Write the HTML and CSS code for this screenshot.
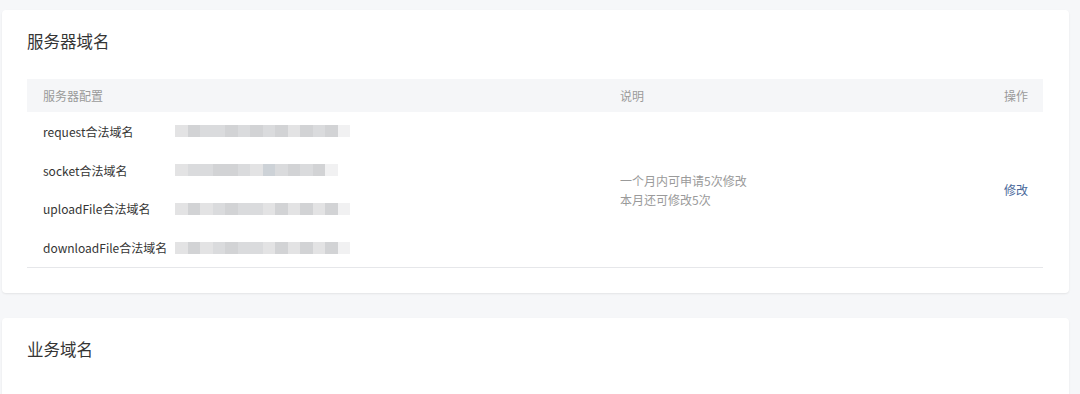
FILE: index.html
```html
<!DOCTYPE html>
<html lang="zh-CN">
<head>
    <meta charset="UTF-8">
    <meta name="viewport" content="width=device-width, initial-scale=1.0">
    <title>开发设置</title>
    <link rel="stylesheet" href="styles.css">
</head>
<body>
    <div class="page">
        <!-- 服务器域名 -->
        <div class="card">
            <h2 class="cardTitle">服务器域名</h2>
            <div class="domainTable">
                <div class="tableHead">
                    <div class="colConfig">服务器配置</div>
                    <div class="colDesc">说明</div>
                    <div class="colAction">操作</div>
                </div>
                <div class="tableBody">
                    <div class="colConfig">
                        <div class="domainRow">
                            <span class="domainLabel">request合法域名</span>
                            <span class="mosaic">
                                <i class="g1"></i><i class="g3"></i><i class="g2"></i><i class="g2"></i><i class="g3"></i><i class="g2"></i><i class="g3"></i><i class="g2"></i><i class="g3"></i><i class="g1"></i><i class="g3"></i><i class="g2"></i><i class="g3"></i><i class="g0"></i>
                            </span>
                        </div>
                        <div class="domainRow">
                            <span class="domainLabel">socket合法域名</span>
                            <span class="mosaic">
                                <i class="g1"></i><i class="g2"></i><i class="g2"></i><i class="g3"></i><i class="g3"></i><i class="g2"></i><i class="g1"></i><i class="g4"></i><i class="g2"></i><i class="g3"></i><i class="g2"></i><i class="g3"></i><i class="g0"></i>
                            </span>
                        </div>
                        <div class="domainRow">
                            <span class="domainLabel">uploadFile合法域名</span>
                            <span class="mosaic">
                                <i class="g1"></i><i class="g3"></i><i class="g1"></i><i class="g2"></i><i class="g3"></i><i class="g2"></i><i class="g2"></i><i class="g1"></i><i class="g3"></i><i class="g1"></i><i class="g3"></i><i class="g1"></i><i class="g3"></i><i class="g0"></i>
                            </span>
                        </div>
                        <div class="domainRow">
                            <span class="domainLabel">downloadFile合法域名</span>
                            <span class="mosaic">
                                <i class="g1"></i><i class="g3"></i><i class="g1"></i><i class="g2"></i><i class="g3"></i><i class="g2"></i><i class="g2"></i><i class="g1"></i><i class="g3"></i><i class="g1"></i><i class="g3"></i><i class="g1"></i><i class="g3"></i><i class="g0"></i>
                            </span>
                        </div>
                    </div>
                    <div class="colDesc descText">
                        <p>一个月内可申请5次修改</p>
                        <p>本月还可修改5次</p>
                    </div>
                    <div class="colAction">
                        <a class="actionLink" href="#">修改</a>
                    </div>
                </div>
            </div>
        </div>

        <!-- 业务域名 -->
        <div class="card cardOpen">
            <h2 class="cardTitle">业务域名</h2>
        </div>
    </div>
</body>
</html>
```

FILE: styles.css
```css
body {
    font-family: "Noto Sans CJK SC", "Liberation Sans", sans-serif;
    background-color: #f6f7f9;
    margin: 0;
    padding: 0;
    color: #353535;
}

.page {
    padding: 10px 11px 0 2px;
    display: flex;
    flex-direction: column;
    gap: 25px;
}

.card {
    background-color: #fff;
    border-radius: 4px;
    box-shadow: 0 1px 2px rgba(0, 0, 0, 0.08);
    padding: 19px 26px 25px 25px;
}

/* 第二张卡片延伸到视窗底部 */
.cardOpen {
    min-height: 32px;
    border-radius: 4px 4px 0 0;
}

.cardTitle {
    margin: 0;
    font-size: 16.5px;
    font-weight: normal;
    line-height: 24px;
    color: #353535;
}

.domainTable {
    margin-top: 26px;
    font-size: 12px;
    border-bottom: 1px solid #e6e7ea;
}

.tableHead,
.tableBody {
    display: grid;
    grid-template-columns: 577px 1fr 120px;
}

.tableHead {
    background-color: #f5f6f8;
    height: 33px;
    line-height: 33px;
    color: #9a9a9a;
}

.colConfig {
    padding-left: 16px;
}

.colDesc {
    padding-left: 16px;
}

.colAction {
    padding-right: 15px;
    text-align: right;
}

.tableBody {
    align-items: center;
}

.domainRow {
    display: flex;
    align-items: center;
    height: 38.75px;
}

.domainLabel {
    width: 132px;
    color: #353535;
}

.mosaic {
    display: flex;
    height: 12px;
    filter: blur(0.6px);
}

.mosaic i {
    display: block;
    width: 12.5px;
    height: 12px;
}

.mosaic .g0 { background-color: #f1f1f2; }
.mosaic .g1 { background-color: #e3e3e4; }
.mosaic .g2 { background-color: #dadbdd; }
.mosaic .g3 { background-color: #d2d3d5; }
.mosaic .g4 { background-color: #cdd2d7; }

.descText {
    color: #9a9a9a;
    line-height: 19px;
}

.descText p {
    margin: 0;
}

.actionLink {
    color: #48679a;
    text-decoration: none;
}
```
